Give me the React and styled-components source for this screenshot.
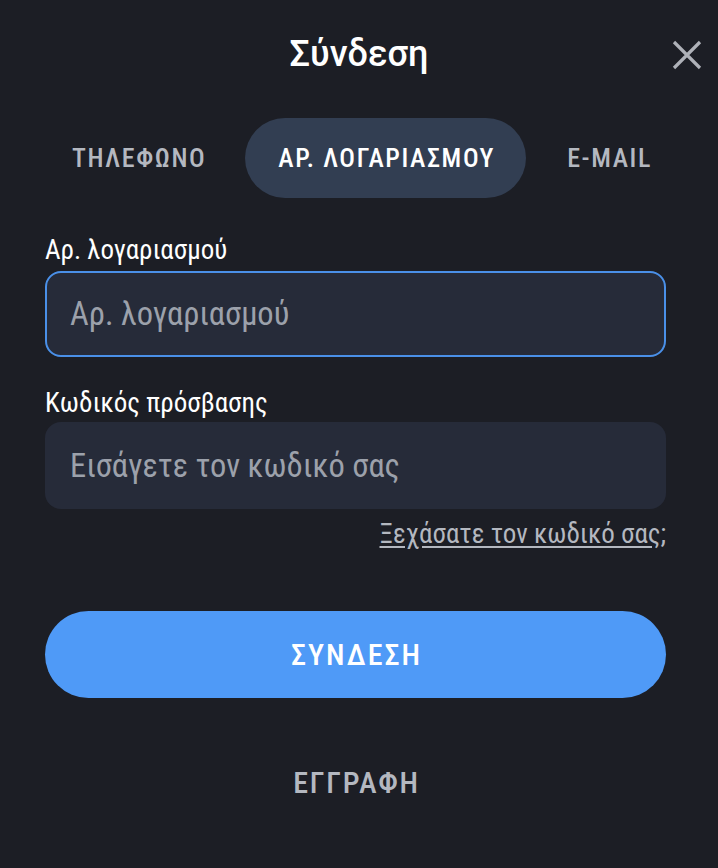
import React from "react";
import styled, { createGlobalStyle } from "styled-components";

const Global = createGlobalStyle`
  html, body {
    margin: 0;
    background: #1c1e25;
    font-family: "Roboto Condensed", Roboto, sans-serif;
  }
`;

const Modal = styled.div`
  width: 718px;
  min-height: 868px;
  box-sizing: border-box;
  background: #1c1e25;
  padding: 0 52px 0 45px;
  display: flex;
  flex-direction: column;
`;

const Header = styled.div`
  position: relative;
  height: 110px;
  display: flex;
  align-items: center;
  justify-content: center;
  margin-right: -7px;
`;

const Title = styled.h1`
  margin: 0;
  color: #fff;
  font-family: Roboto, sans-serif;
  font-size: 36px;
  font-weight: 500;
  padding-bottom: 2px;
`;

const Close = styled.button`
  position: absolute;
  right: -32px;
  top: 37px;
  width: 36px;
  height: 36px;
  padding: 0;
  border: none;
  background: none;
  color: #aeb1b8;
  display: flex;
  align-items: center;
  justify-content: center;
`;

const Tabs = styled.div`
  display: flex;
  gap: 8px;
  margin-left: -6px;
  margin-right: -20px;
  margin-top: 8px;
`;

const Tab = styled.button`
  flex-shrink: 0;
  white-space: nowrap;
  height: 80px;
  padding: 0 31px 0 33px;
  border: none;
  border-radius: 40px;
  background: ${(p) => (p.$active ? "#323e52" : "transparent")};
  color: ${(p) => (p.$active ? "#ffffff" : "#b4b8c0")};
  font-family: inherit;
  font-size: 26px;
  font-weight: 500;
  letter-spacing: 1.6px;
`;

const Field = styled.div`
  display: flex;
  flex-direction: column;
  margin-top: ${(p) => p.$top}px;
`;

const Label = styled.label`
  color: #fff;
  font-size: 27px;
  line-height: 30px;
  margin-bottom: ${(p) => p.$gap}px;
`;

const Input = styled.input`
  height: ${(p) => p.$h}px;
  box-sizing: border-box;
  border-radius: 16px;
  border: 2px solid ${(p) => (p.$focused ? "#4a90e8" : "transparent")};
  background: #262b39;
  padding: 0 23px;
  color: #fff;
  font-family: inherit;
  font-size: 32.5px;
  outline: none;
  &::placeholder {
    color: #9ca1ab;
  }
`;

const Forgot = styled.a`
  align-self: flex-end;
  margin-top: 10px;
  color: #b4b8c0;
  font-size: 27px;
  line-height: 30px;
  text-decoration: underline;
  text-underline-offset: 3px;
`;

const Submit = styled.button`
  margin-top: 62px;
  height: 87px;
  border: none;
  border-radius: 44px;
  background: #4f9af7;
  color: #fff;
  font-family: inherit;
  font-size: 30px;
  font-weight: 500;
  letter-spacing: 2px;
  text-indent: 2px;
`;

const Register = styled.button`
  align-self: center;
  margin-top: 67px;
  height: 34px;
  padding: 0 0 0 2px;
  border: none;
  background: none;
  color: #b4b8c0;
  font-family: inherit;
  font-size: 30px;
  font-weight: 500;
  letter-spacing: 1.8px;
`;

export default function App() {
  return (
    <>
      <Global />
      <Modal>
        <Header>
          <Title>Σύνδεση</Title>
          <Close aria-label="close">
            <svg width="32" height="32" viewBox="0 0 32 32" fill="none">
              <path
                d="M3 3L29 29M29 3L3 29"
                stroke="currentColor"
                strokeWidth="3.2"
              />
            </svg>
          </Close>
        </Header>
        <Tabs>
          <Tab>ΤΗΛΕΦΩΝΟ</Tab>
          <Tab $active>ΑΡ. ΛΟΓΑΡΙΑΣΜΟΥ</Tab>
          <Tab>E-MAIL</Tab>
        </Tabs>
        <Field $top={37}>
          <Label $gap={6}>Αρ. λογαριασμού</Label>
          <Input $h={86} $focused placeholder="Αρ. λογαριασμού" />
        </Field>
        <Field $top={31}>
          <Label $gap={4}>Κωδικός πρόσβασης</Label>
          <Input $h={87} type="password" placeholder="Εισάγετε τον κωδικό σας" />
          <Forgot href="#">Ξεχάσατε τον κωδικό σας;</Forgot>
        </Field>
        <Submit>ΣΥΝΔΕΣΗ</Submit>
        <Register>ΕΓΓΡΑΦΗ</Register>
      </Modal>
    </>
  );
}
